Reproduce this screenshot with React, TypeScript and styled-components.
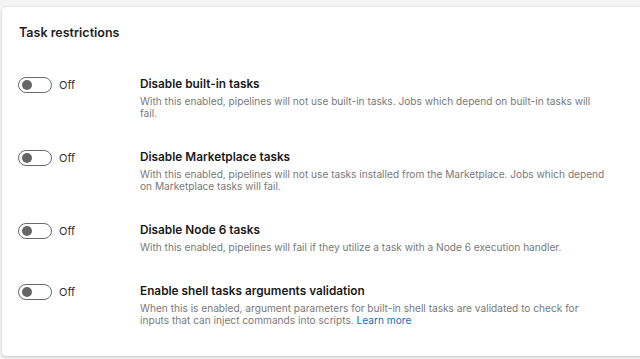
import styled, { createGlobalStyle } from 'styled-components';

const GlobalStyle = createGlobalStyle`
  html, body {
    margin: 0;
    background: #f4f4f4;
    font-family: Inter, 'Noto Sans', sans-serif;
    overflow: hidden;
  }
`;

type Restriction = {
  title: string;
  description: string;
  link?: string;
};

const restrictions: Restriction[] = [
  {
    title: 'Disable built-in tasks',
    description:
      'With this enabled, pipelines will not use built-in tasks. Jobs which depend on built-in tasks will fail.',
  },
  {
    title: 'Disable Marketplace tasks',
    description:
      'With this enabled, pipelines will not use tasks installed from the Marketplace. Jobs which depend on Marketplace tasks will fail.',
  },
  {
    title: 'Disable Node 6 tasks',
    description:
      'With this enabled, pipelines will fail if they utilize a task with a Node 6 execution handler.',
  },
  {
    title: 'Enable shell tasks arguments validation',
    description:
      'When this is enabled, argument parameters for built-in shell tasks are validated to check for inputs that can inject commands into scripts.',
    link: 'Learn more',
  },
];

const App = () => {
  return (
    <Page>
      <GlobalStyle />
      <Card>
        <Heading>Task restrictions</Heading>
        <List>
          {restrictions.map((item) => (
            <Row key={item.title}>
              <ToggleCell>
                <Toggle role="switch" aria-checked="false">
                  <Knob />
                </Toggle>
                <ToggleLabel>Off</ToggleLabel>
              </ToggleCell>
              <Text>
                <Title>{item.title}</Title>
                <Description>
                  {item.description}
                  {item.link && (
                    <>
                      {' '}
                      <Link href="#">{item.link}</Link>
                    </>
                  )}
                </Description>
              </Text>
            </Row>
          ))}
        </List>
      </Card>
    </Page>
  );
};

const Page = styled.div`
  padding: 7px 0 0 2px;
  height: 359px;
  box-sizing: border-box;
`;

const Card = styled.section`
  width: 660px;
  box-sizing: border-box;
  background: #fff;
  border-radius: 4px;
  box-shadow: 0 1px 3px rgba(0, 0, 0, 0.18), 0 0 1px rgba(0, 0, 0, 0.1);
  padding: 18px 0 30px 16px;
`;

const Heading = styled.h2`
  margin: 0;
  font-size: 12.5px;
  line-height: 16px;
  font-weight: 600;
  color: #1e1e1e;
  padding-left: 1px;
`;

const List = styled.div`
  display: flex;
  flex-direction: column;
  gap: 31px;
  margin-top: 36px;
`;

const Row = styled.div`
  display: grid;
  grid-template-columns: 122px 466px;
  align-items: start;
`;

const ToggleCell = styled.div`
  display: flex;
  align-items: center;
  gap: 7px;
  height: 16px;
`;

const Toggle = styled.div`
  width: 34px;
  height: 16px;
  box-sizing: border-box;
  border: 1px solid #6b6b6b;
  border-radius: 8px;
  display: flex;
  align-items: center;
  padding-left: 3px;
`;

const Knob = styled.span`
  width: 10px;
  height: 10px;
  border-radius: 50%;
  background: #666;
`;

const ToggleLabel = styled.span`
  font-size: 11px;
  color: #323130;
`;

const Text = styled.div`
  display: flex;
  flex-direction: column;
  gap: 4px;
`;

const Title = styled.div`
  font-size: 11.8px;
  line-height: 14px;
  font-weight: 600;
  color: #1a1a1a;
`;

const Description = styled.div`
  font-size: 10.15px;
  line-height: 12px;
  color: #7a7a7a;
`;

const Link = styled.a`
  color: #106ebe;
  text-decoration: none;
`;

export default App;
